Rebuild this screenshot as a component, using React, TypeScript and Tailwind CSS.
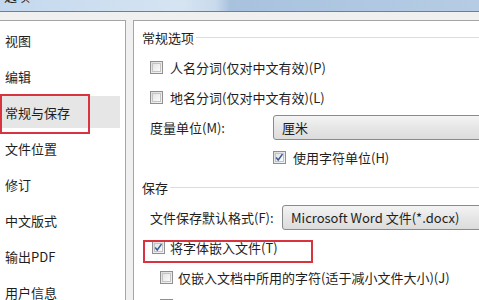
import React from 'react'

const NAV = ['视图', '编辑', '常规与保存', '文件位置', '修订', '中文版式', '输出PDF', '用户信息']

const FONT = { fontFamily: '"Noto Sans CJK SC", "Noto Sans", sans-serif' }

function CheckBox({ checked }: { checked?: boolean }) {
  return (
    <div className="relative flex h-[13px] w-[13px] shrink-0 items-center justify-center border border-[#8f8f8f] bg-[linear-gradient(135deg,#dcdcdc,#f6f6f6)]">
      <div className="h-[9px] w-[9px] border border-[#c4c4c4] bg-[linear-gradient(135deg,#e4e4e4,#fbfbfb)]" />
      {checked && (
        <svg viewBox="0 0 13 13" className="absolute left-0 top-0 h-[11px] w-[11px]">
          <path d="M2.5 6.5 L5 9.5 L10 2.5" fill="none" stroke="#3b5a9a" strokeWidth="1.8" />
        </svg>
      )}
    </div>
  )
}

function Select({ value, width }: { value: string; width: string }) {
  return (
    <div
      className={`flex h-[25px] ${width} shrink-0 items-center rounded-[3px] border border-[#8a8a8a] bg-[linear-gradient(#f4f4f4,#e6e6e6_50%,#dcdcdc)] pl-[8px]`}
    >
      {value}
    </div>
  )
}

function GroupTitle({ title }: { title: string }) {
  return (
    <div className="flex h-[30px] items-center pl-[8px]">
      <span>{title}</span>
      <div className="ml-[2px] h-px flex-1 bg-[#d5dfe5]" />
    </div>
  )
}

export default function App() {
  return (
    <div className="h-[300px] w-[479px] overflow-hidden bg-[#f0f0f0] text-[13px] leading-none text-[#1e1e1e]" style={FONT}>
      <div className="h-[12px] overflow-hidden border-b border-[#6b7f96] bg-[linear-gradient(to_right,#c3d8ee_0%,#d6e4f2_38%,#c9daec_45%,#a8c2de_48%,#b6cce4_100%)]">
        <div className="-mt-[11px] pl-[4px] text-[13px] leading-[14px]">选项</div>
      </div>
      <div className="flex gap-[7px] pt-[8px]">
        <div className="h-[300px] w-[126px] shrink-0 border-r border-t border-[#a5a5a5] bg-white pt-[3px]">
          <div className="flex flex-col gap-[4px]">
            {NAV.map((item) => (
              <div key={item} className="relative">
                <div
                  className={`flex h-[32px] w-[120px] items-center pl-[5px] ${item === '常规与保存' ? 'bg-[#e6e6e6]' : ''}`}
                >
                  {item}
                </div>
                {item === '常规与保存' && (
                  <div className="absolute left-0 top-[-2px] h-[40px] w-[90px] border-2 border-[#d8343f]" />
                )}
              </div>
            ))}
          </div>
        </div>
        <div className="h-[300px] flex-1 border-l border-t border-[#a5a5a5] bg-white pt-[1px]">
          <GroupTitle title="常规选项" />
          <div className="flex h-[30px] items-center gap-[7px] pl-[16px]">
            <CheckBox />
            <span>人名分词(仅对中文有效)(P)</span>
          </div>
          <div className="flex h-[30px] items-center gap-[7px] pl-[16px]">
            <CheckBox />
            <span>地名分词(仅对中文有效)(L)</span>
          </div>
          <div className="flex h-[30px] items-center pl-[16px]">
            <span className="w-[123px] shrink-0">度量单位(M):</span>
            <Select value="厘米" width="w-[230px]" />
          </div>
          <div className="flex h-[30px] items-center gap-[7px] pl-[139px]">
            <CheckBox checked />
            <span>使用字符单位(H)</span>
          </div>
          <GroupTitle title="保存" />
          <div className="flex h-[30px] items-center pl-[16px]">
            <span className="w-[132px] shrink-0">文件保存默认格式(F):</span>
            <Select value="Microsoft Word 文件(*.docx)" width="w-[220px]" />
          </div>
          <div className="relative flex h-[30px] items-center gap-[5px] pl-[18px]">
            <CheckBox checked />
            <span>将字体嵌入文件(T)</span>
            <div className="absolute left-[9px] top-[8px] h-[23px] w-[170px] border-2 border-[#d8343f]" />
          </div>
          <div className="flex h-[30px] items-center gap-[5px] pl-[26px]">
            <CheckBox />
            <span>仅嵌入文档中所用的字符(适于减小文件大小)(J)</span>
          </div>
          <div className="flex h-[26px] items-center gap-[5px] pl-[26px]">
            <CheckBox />
            <span>不嵌入常用系统字体(S)</span>
          </div>
        </div>
      </div>
    </div>
  )
}
